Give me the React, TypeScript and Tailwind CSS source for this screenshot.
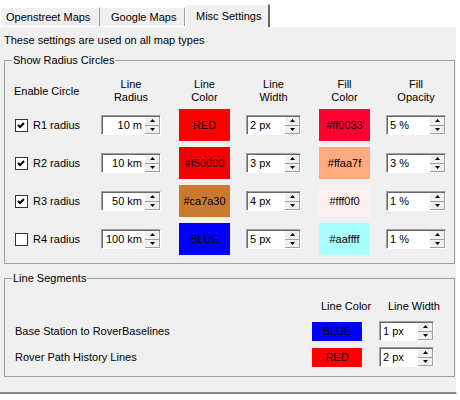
import React from "react";

type RowData = {
  label: string;
  checked: boolean;
  radius: string;
  lineColor: string;
  lineText: string;
  width: string;
  fillColor: string;
  fillText: string;
  opacity: string;
};

const rows: RowData[] = [
  { label: "R1 radius", checked: true, radius: "10 m", lineColor: "#ff0000", lineText: "RED", width: "2 px", fillColor: "#ff0033", fillText: "#ff0033", opacity: "5 %" },
  { label: "R2 radius", checked: true, radius: "10 km", lineColor: "#f50000", lineText: "#f50000", width: "3 px", fillColor: "#ffaa7f", fillText: "#ffaa7f", opacity: "3 %" },
  { label: "R3 radius", checked: true, radius: "50 km", lineColor: "#ca7a30", lineText: "#ca7a30", width: "4 px", fillColor: "#fff0f0", fillText: "#fff0f0", opacity: "1 %" },
  { label: "R4 radius", checked: false, radius: "100 km", lineColor: "#0000ff", lineText: "BLUE", width: "5 px", fillColor: "#aaffff", fillText: "#aaffff", opacity: "1 %" },
];

function Arrow({ up }: { up?: boolean }) {
  return (
    <svg width="5" height="3" viewBox="0 0 5 3" className="block">
      {up ? <polygon points="2.5,0 5,3 0,3" fill="#000" /> : <polygon points="0,0 5,0 2.5,3" fill="#000" />}
    </svg>
  );
}

// Win32 style up/down numeric box
function Spin({ value, w, right }: { value: string; w: string; right?: boolean }) {
  return (
    <div className={`flex h-[20px] ${w} border-t border-l border-[#a0a0a0] border-r border-b border-r-white border-b-white`}>
      <div className="flex flex-1 border-t border-l border-[#696969] bg-white">
        <span className={`flex-1 leading-[17px] ${right ? "text-right pr-[3px]" : "pl-[2px]"}`}>{value}</span>
        <div className="flex w-[15px] flex-col">
          <div className="flex flex-1 items-center justify-center border-r border-b border-[#a0a0a0] bg-[#f0f0f0]">
            <Arrow up />
          </div>
          <div className="flex flex-1 items-center justify-center border-r border-b border-[#a0a0a0] bg-[#f0f0f0]">
            <Arrow />
          </div>
        </div>
      </div>
    </div>
  );
}

function Check({ on }: { on: boolean }) {
  return (
    <div className="h-[13px] w-[13px] border border-[#333333] bg-white">
      {on && (
        <svg width="11" height="11" viewBox="0 0 11 11" className="block">
          <polyline points="2,5 4,7 8,3" fill="none" stroke="#000" strokeWidth="2" />
        </svg>
      )}
    </div>
  );
}

function Header({ a, b, w, ml }: { a: string; b: string; w: string; ml: string }) {
  return (
    <div className={`${w} ${ml} flex flex-col items-center`}>
      <span>{a}</span>
      <span>{b}</span>
    </div>
  );
}

export default function App() {
  return (
    <div
      className="relative h-[400px] w-[460px] overflow-hidden bg-white text-[11px] leading-[13px] text-black"
      style={{ fontFamily: '"Liberation Sans", Arial, sans-serif' }}
    >
      {/* tab strip */}
      <div className="flex h-[26px] items-end">
        <div className="flex h-[19px] w-[100px] items-center border-t border-l border-white border-r border-r-[#a0a0a0] bg-[#f0f0f0] pl-[5px]">
          Openstreet Maps
        </div>
        <div className="flex h-[19px] w-[85px] items-center border-t border-white border-r border-r-[#a0a0a0] bg-[#f0f0f0] pl-[11px]">
          Google Maps
        </div>
        <div className="relative z-10 -mb-[1px] flex h-[23px] w-[85px] items-start border-t border-l border-white border-r-2 border-r-[#696969] bg-[#f0f0f0] pl-[10px] pt-[5px]">
          Misc Settings
        </div>
      </div>

      {/* page */}
      <div className="h-[368px] w-[457px] border-t border-white border-r border-r-white border-b-2 border-b-[#8a8a8a] bg-[#f0f0f0]">
        <p className="pl-[4px] pt-[7px]">These settings are used on all map types</p>

        <fieldset className="ml-[4px] mt-[7px] w-[451px] border border-[#a0a0a0] pb-[8px] pl-[9px]">
          <legend className="ml-[-2px] px-[1px]">Show Radius Circles</legend>

          <div className="mt-[11px] flex">
            <div className="flex w-[87px] items-center">Enable Circle</div>
            <Header a="Line" b="Radius" w="w-[60px]" ml="ml-0" />
            <Header a="Line" b="Color" w="w-[51px]" ml="ml-[18px]" />
            <Header a="Line" b="Width" w="w-[55px]" ml="ml-[16px]" />
            <Header a="Fill" b="Color" w="w-[51px]" ml="ml-[18px]" />
            <Header a="Fill" b="Opacity" w="w-[60px]" ml="ml-[16px]" />
          </div>

          <div className="mt-[5px] flex flex-col gap-[6px]">
            {rows.map((r) => (
              <div key={r.label} className="flex h-[32px] items-center">
                <div className="flex w-[87px] items-center gap-[5px] pl-[1px]">
                  <Check on={r.checked} />
                  <span>{r.label}</span>
                </div>
                <Spin value={r.radius} w="w-[60px]" right />
                <div
                  className="ml-[18px] flex h-[32px] w-[51px] items-center justify-center"
                  style={{ backgroundColor: r.lineColor }}
                >
                  {r.lineText}
                </div>
                <div className="ml-[16px]">
                  <Spin value={r.width} w="w-[55px]" />
                </div>
                <div
                  className="ml-[18px] flex h-[32px] w-[51px] items-center justify-center"
                  style={{ backgroundColor: r.fillColor }}
                >
                  {r.fillText}
                </div>
                <div className="ml-[16px]">
                  <Spin value={r.opacity} w="w-[60px]" />
                </div>
              </div>
            ))}
          </div>
        </fieldset>

        <fieldset className="ml-[4px] mt-[8px] w-[451px] border border-[#a0a0a0] pb-[9px] pl-[9px]">
          <legend className="ml-[-2px] px-[1px]">Line Segments</legend>

          <div className="mt-[15px] flex">
            <div className="w-[307px]" />
            <span className="w-[67px]">Line Color</span>
            <span>Line Width</span>
          </div>

          <div className="mt-[8px] flex flex-col gap-[6px]">
            <div className="flex h-[20px] items-center">
              <span className="w-[298px] pl-[1px]">Base Station to RoverBaselines</span>
              <div className="flex h-[19px] w-[50px] items-center justify-center bg-[#0000ff]">BLUE</div>
              <div className="ml-[17px]">
                <Spin value="1 px" w="w-[55px]" />
              </div>
            </div>
            <div className="flex h-[20px] items-center">
              <span className="w-[298px] pl-[1px]">Rover Path History Lines</span>
              <div className="flex h-[19px] w-[50px] items-center justify-center bg-[#ff0000]">RED</div>
              <div className="ml-[17px]">
                <Spin value="2 px" w="w-[55px]" />
              </div>
            </div>
          </div>
        </fieldset>
      </div>
    </div>
  );
}
